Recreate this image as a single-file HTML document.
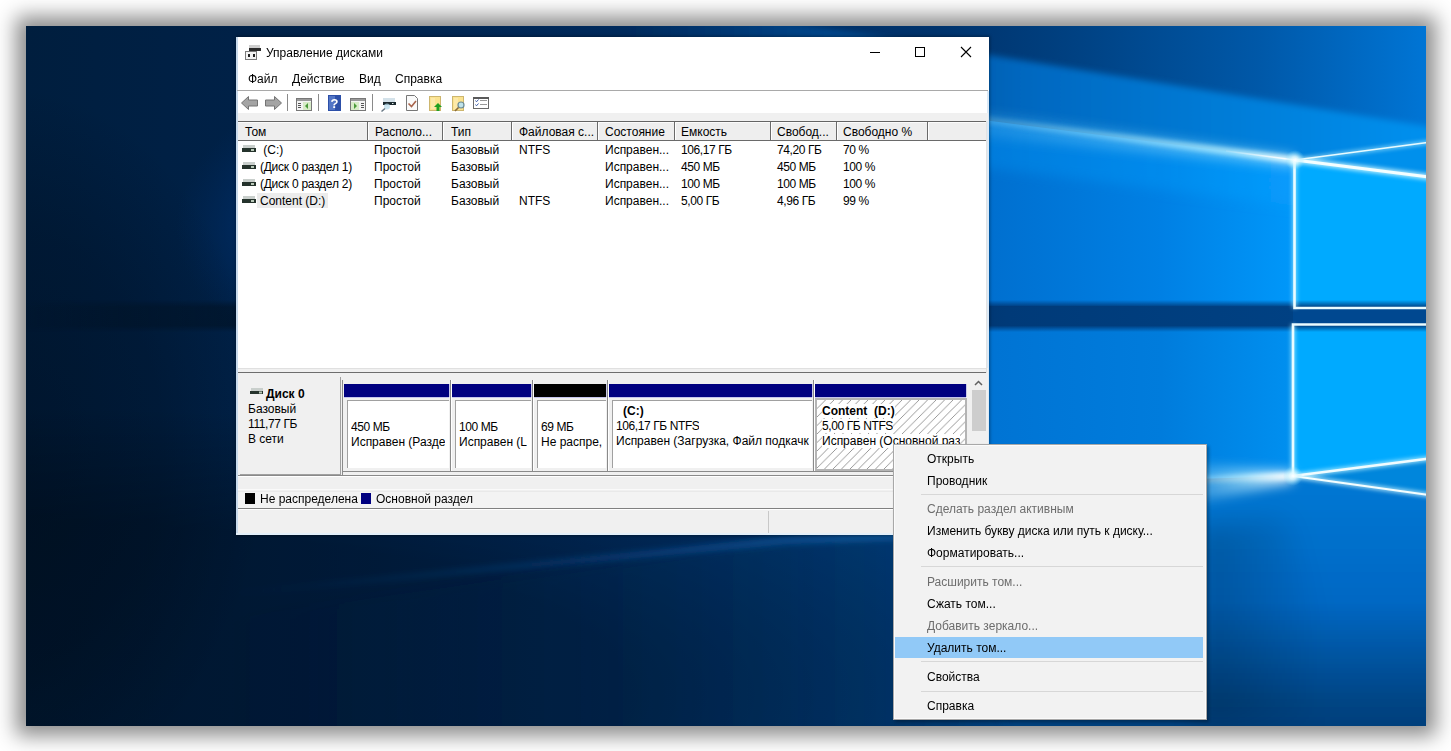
<!DOCTYPE html>
<html><head><meta charset="utf-8">
<style>
*{box-sizing:border-box;margin:0;padding:0}
html,body{width:1451px;height:751px;overflow:hidden;background:#fff}
body{position:relative;font-family:"Liberation Sans",sans-serif;font-size:12px;color:#000}
.a{position:absolute;white-space:nowrap}
.t{line-height:16px;height:16px}
.b{font-weight:bold}
.dis{color:#6d6d6d}
.n{letter-spacing:-0.4px}
</style></head><body>

<div class="a" style="left:26px;top:26px;width:1400px;height:700px;box-shadow:0 0 19px 10px rgba(0,0,0,0.45);overflow:hidden;background:#001f3f">
<svg width="1520" height="820" viewBox="-60 -60 1520 820" style="position:absolute;left:-60px;top:-60px">
<defs>
<linearGradient id="base" x1="0" y1="0" x2="1400" y2="0" gradientUnits="userSpaceOnUse">
<stop offset="0" stop-color="#001e3e"/>
<stop offset="0.2" stop-color="#00224a"/>
<stop offset="0.4" stop-color="#00295a"/>
<stop offset="0.65" stop-color="#00336c"/>
<stop offset="0.73" stop-color="#003e7d"/>
<stop offset="0.88" stop-color="#0058a8"/>
<stop offset="1" stop-color="#0075d5"/>
</linearGradient>
<linearGradient id="sky" x1="600" y1="0" x2="1400" y2="0" gradientUnits="userSpaceOnUse">
<stop offset="0" stop-color="#0050a0" stop-opacity="0"/>
<stop offset="0.5" stop-color="#0068c0" stop-opacity="1"/>
<stop offset="1" stop-color="#0090ee" stop-opacity="1"/>
</linearGradient>
<linearGradient id="paneL" x1="600" y1="0" x2="1269" y2="0" gradientUnits="userSpaceOnUse">
<stop offset="0" stop-color="#0060b8" stop-opacity="0"/>
<stop offset="0.55" stop-color="#0070d0" stop-opacity="1"/>
<stop offset="0.8" stop-color="#0080e4" stop-opacity="1"/>
<stop offset="1" stop-color="#0098fa" stop-opacity="1"/>
</linearGradient>
<linearGradient id="paneL2" x1="600" y1="0" x2="1269" y2="0" gradientUnits="userSpaceOnUse">
<stop offset="0" stop-color="#0060b8" stop-opacity="0"/>
<stop offset="0.55" stop-color="#0074d4" stop-opacity="1"/>
<stop offset="0.8" stop-color="#007cdc" stop-opacity="1"/>
<stop offset="1" stop-color="#0090f0" stop-opacity="1"/>
</linearGradient>
<linearGradient id="band" x1="0" y1="0" x2="1400" y2="0" gradientUnits="userSpaceOnUse">
<stop offset="0" stop-color="#00101f" stop-opacity="0.1"/>
<stop offset="0.06" stop-color="#00101f" stop-opacity="0.35"/>
<stop offset="0.15" stop-color="#00101f" stop-opacity="0.55"/>
<stop offset="0.4" stop-color="#001a3c" stop-opacity="0.9"/>
<stop offset="0.7" stop-color="#003a78" stop-opacity="1"/>
<stop offset="1" stop-color="#004488" stop-opacity="1"/>
</linearGradient>
<linearGradient id="floor" x1="0" y1="450" x2="0" y2="700" gradientUnits="userSpaceOnUse">
<stop offset="0" stop-color="#0078d4"/>
<stop offset="0.5" stop-color="#0068c4"/>
<stop offset="0.9" stop-color="#004585"/>
<stop offset="1" stop-color="#00407c"/>
</linearGradient>
<linearGradient id="floorL" x1="200" y1="0" x2="1267" y2="0" gradientUnits="userSpaceOnUse">
<stop offset="0" stop-color="#002a5a" stop-opacity="0"/>
<stop offset="0.6" stop-color="#003a70" stop-opacity="0.45"/>
<stop offset="1" stop-color="#0056a2" stop-opacity="1"/>
</linearGradient>
<linearGradient id="floorLeft" x1="1180" y1="0" x2="1300" y2="0" gradientUnits="userSpaceOnUse">
<stop offset="0" stop-color="#000" stop-opacity="0.2"/>
<stop offset="1" stop-color="#000" stop-opacity="0"/>
</linearGradient>
<radialGradient id="dl" cx="0" cy="1" r="1" gradientTransform="scale(1,0.9)">
<stop offset="0" stop-color="#000" stop-opacity="0.28"/>
<stop offset="0.6" stop-color="#000" stop-opacity="0.28"/>
<stop offset="1" stop-color="#000" stop-opacity="0"/>
</radialGradient>
<linearGradient id="beamL" x1="850" y1="0" x2="1269" y2="0" gradientUnits="userSpaceOnUse">
<stop offset="0" stop-color="#90e0ff" stop-opacity="0"/>
<stop offset="0.5" stop-color="#90e0ff" stop-opacity="0.5"/>
<stop offset="0.85" stop-color="#b0ecff" stop-opacity="0.85"/>
<stop offset="1" stop-color="#e8fcff" stop-opacity="1"/>
</linearGradient>
<linearGradient id="beamL2" x1="1140" y1="0" x2="1267" y2="0" gradientUnits="userSpaceOnUse">
<stop offset="0" stop-color="#b0ecff" stop-opacity="0"/>
<stop offset="0.6" stop-color="#c8f4ff" stop-opacity="0.6"/>
<stop offset="1" stop-color="#ffffff" stop-opacity="1"/>
</linearGradient>
<linearGradient id="streak" x1="200" y1="0" x2="900" y2="0" gradientUnits="userSpaceOnUse">
<stop offset="0" stop-color="#1060b0" stop-opacity="0"/>
<stop offset="0.6" stop-color="#1a6ac0" stop-opacity="0.35"/>
<stop offset="1" stop-color="#2080d0" stop-opacity="0.5"/>
</linearGradient>
<linearGradient id="beamL3" x1="1190" y1="0" x2="1269" y2="0" gradientUnits="userSpaceOnUse">
<stop offset="0" stop-color="#ffffff" stop-opacity="0"/>
<stop offset="1" stop-color="#ffffff" stop-opacity="1"/>
</linearGradient>
<linearGradient id="underBeam" x1="700" y1="0" x2="1269" y2="0" gradientUnits="userSpaceOnUse">
<stop offset="0" stop-color="#0090f0" stop-opacity="0"/>
<stop offset="0.5" stop-color="#0090f0" stop-opacity="0.4"/>
<stop offset="1" stop-color="#10a0ff" stop-opacity="0.45"/>
</linearGradient>
<radialGradient id="lglow">
<stop offset="0" stop-color="#003a80" stop-opacity="1"/>
<stop offset="0.5" stop-color="#003478" stop-opacity="0.75"/>
<stop offset="1" stop-color="#002a60" stop-opacity="0"/>
</radialGradient>
<linearGradient id="ldark" x1="0" y1="0" x2="200" y2="0" gradientUnits="userSpaceOnUse">
<stop offset="0" stop-color="#000814" stop-opacity="0.3"/>
<stop offset="1" stop-color="#000814" stop-opacity="0"/>
</linearGradient>
<radialGradient id="ldark2">
<stop offset="0" stop-color="#000814" stop-opacity="0.4"/>
<stop offset="0.6" stop-color="#000814" stop-opacity="0.25"/>
<stop offset="1" stop-color="#000814" stop-opacity="0"/>
</radialGradient>
<linearGradient id="bandV" x1="0" y1="274" x2="0" y2="306" gradientUnits="userSpaceOnUse">
<stop offset="0" stop-color="#fff" stop-opacity="0"/>
<stop offset="0.22" stop-color="#fff" stop-opacity="1"/>
<stop offset="0.8" stop-color="#fff" stop-opacity="1"/>
<stop offset="1" stop-color="#fff" stop-opacity="0"/>
</linearGradient>
<mask id="bandMask" maskUnits="userSpaceOnUse" x="-60" y="260" width="1520" height="60"><rect x="-60" y="274" width="1520" height="32" fill="url(#bandV)"/></mask>
<filter id="b2" x="-20%" y="-20%" width="140%" height="140%"><feGaussianBlur stdDeviation="2"/></filter>
<filter id="b1" x="-20%" y="-20%" width="140%" height="140%"><feGaussianBlur stdDeviation="0.7"/></filter>
<filter id="b6" x="-20%" y="-50%" width="140%" height="200%"><feGaussianBlur stdDeviation="6"/></filter>
<filter id="b12" x="-50%" y="-50%" width="200%" height="200%"><feGaussianBlur stdDeviation="14"/></filter>
<filter id="b3" x="-20%" y="-50%" width="140%" height="200%"><feGaussianBlur stdDeviation="3"/></filter>
<radialGradient id="glow">
<stop offset="0" stop-color="#ffffff" stop-opacity="1"/>
<stop offset="0.35" stop-color="#e0faff" stop-opacity="0.75"/>
<stop offset="1" stop-color="#80e0ff" stop-opacity="0"/>
</radialGradient>
</defs>
<rect width="1400" height="700" fill="url(#base)"/>
<ellipse cx="340" cy="200" rx="190" ry="140" fill="url(#lglow)"/>
<ellipse cx="-20" cy="420" rx="260" ry="360" fill="url(#ldark2)"/>
<polygon points="600,-30 1400,100 1460,112 1460,125 1269,134 600,48" fill="url(#sky)" filter="url(#b3)"/>
<polygon points="600,48 1269,134 1269,280 600,280" fill="url(#paneL)"/>
<polygon points="700,61 1269,134 1269,180 700,110" fill="url(#underBeam)" filter="url(#b6)"/>
<polygon points="1269,134 1460,108.8 1460,282 1269,282" fill="#0090ec"/>
<polygon points="1269,134 1460,158.3 1460,282 1269,282" fill="#00aaff"/>
<polygon points="600,299 1267,299 1267,450 600,470" fill="url(#paneL2)"/>
<polygon points="1267,298.5 1460,298.5 1460,425.3 1267,450" fill="#00aaff"/>
<polygon points="1267,450 1460,425.3 1460,477" fill="#0086dc"/>
<polygon points="1267,450 1460,477 1460,760 1000,760 900,520 1150,458" fill="url(#floor)" filter="url(#b2)"/>
<polygon points="1170,500 1260,490 1330,700 1170,700" fill="url(#floorLeft)" filter="url(#b12)"/>
<polygon points="150,600 1150,458 900,520 1000,760 150,760" fill="url(#floorL)" filter="url(#b6)"/>
<rect x="-60" y="274" width="1520" height="32" fill="url(#band)" mask="url(#bandMask)"/>
<rect x="1267" y="282" width="193" height="16.5" fill="#004890"/>
<rect x="0" y="380" width="1000" height="320" fill="url(#dl)"/>
<polygon points="200,566 760,511 900,505 900,512 760,518 200,570" fill="url(#streak)" filter="url(#b3)"/>
<!-- beams -->
<g filter="url(#b6)">
<polygon points="850,72 1269,130 1269,140 850,100" fill="url(#beamL)" opacity="0.6"/>
<polygon points="1120,436 1267,446 1267,456 1120,486" fill="url(#beamL2)" opacity="0.95"/>
</g>
<g filter="url(#b2)">
<path d="M850,80 L1269,134" stroke="url(#beamL)" stroke-width="7" fill="none" opacity="0.95"/>
<path d="M1269,134 L1460,158.3" stroke="#c8f4ff" stroke-width="6" fill="none" opacity="0.9"/>
<path d="M1269,134 L1460,108.8" stroke="#b8f0ff" stroke-width="3" opacity="0.8"/>
<path d="M1140,455 L1267,450" stroke="url(#beamL2)" stroke-width="7" fill="none"/>
<path d="M1267,450 L1460,477" stroke="#c8f4ff" stroke-width="4" fill="none" opacity="0.9"/>
<path d="M1267,450 L1460,425.3" stroke="#b8f0ff" stroke-width="4.5" opacity="0.9"/>
<path d="M1268.5,134 L1268.5,282" stroke="#b0f0ff" stroke-width="4" opacity="0.8"/>
<path d="M1267,298.5 L1267,450" stroke="#b0f0ff" stroke-width="4" opacity="0.8"/>
</g>
<g filter="url(#b1)">
<path d="M1200,125 L1269,134" stroke="url(#beamL3)" stroke-width="1.4" fill="none"/>
<path d="M1269,134 L1460,158.3" stroke="#f4feff" stroke-width="3" fill="none"/>
<path d="M1269,134 L1460,108.8" stroke="#e8fbff" stroke-width="1.4"/>
<path d="M1268.5,134 L1268.5,282 L1460,282" stroke="#eafcff" stroke-width="2.6" fill="none"/>
<path d="M1460,298.5 L1267,298.5 L1267,450" stroke="#eafcff" stroke-width="2.6" fill="none"/>
<path d="M1267,450 L1460,477" stroke="#f4feff" stroke-width="2" fill="none"/>
<path d="M1267,450 L1460,425.3" stroke="#f0fcff" stroke-width="2.4"/>
</g>
<circle cx="1269" cy="134" r="10" fill="url(#glow)"/>
<circle cx="1267" cy="450" r="10" fill="url(#glow)"/>
</svg></div>
<div class="a" style="left:237px;top:37px;width:752px;height:498px;background:#fff;box-shadow:0 0 3px 1px rgba(0,0,0,0.35)"></div>
<div class="a" style="left:236px;top:37px;width:2px;height:498px;background:#c8daec;"></div>
<div class="a" style="left:987px;top:91px;width:2px;height:444px;background:#dbe9f6;"></div>
<svg class="a" style="left:245px;top:44px" width="16" height="16" viewBox="0 0 16 16">
<rect x="4" y="1" width="11" height="3" fill="#cfcfcf"/>
<rect x="4" y="4" width="12" height="3" fill="#2b2b2b"/>
<rect x="0.5" y="7.5" width="11" height="8" fill="#f4f4f4" stroke="#7a7a7a" stroke-width="1"/>
<rect x="3" y="10" width="2" height="3" fill="#202020"/>
<rect x="8" y="10" width="2" height="3" fill="#202020"/>
</svg>
<div class="a t " style="left:266px;top:45px;">Управление дисками</div>
<svg class="a" style="left:860px;top:40px" width="120" height="24" viewBox="0 0 120 24">
<rect x="10" y="12" width="10" height="1" fill="#000"/>
<rect x="55.5" y="7.5" width="9" height="9" fill="none" stroke="#000" stroke-width="1"/>
<path d="M101 7 L111 17 M111 7 L101 17" stroke="#000" stroke-width="1.1"/>
</svg>
<div class="a t " style="left:248px;top:71px;">Файл</div>
<div class="a t " style="left:292px;top:71px;">Действие</div>
<div class="a t " style="left:359px;top:71px;">Вид</div>
<div class="a t " style="left:395px;top:71px;">Справка</div>
<div class="a" style="left:237px;top:90px;width:751px;height:1px;background:#a9a9a9;"></div>
<svg class="a" style="left:237px;top:91px" width="260" height="22" viewBox="0 0 260 22">
<path d="M4.5 12 L11.5 5.5 L11.5 9 L20.5 9 L20.5 15 L11.5 15 L11.5 18.5 Z" fill="#a4a4a4" stroke="#747474" stroke-width="1"/>
<path d="M44.5 12 L37.5 5.5 L37.5 9 L28.5 9 L28.5 15 L37.5 15 L37.5 18.5 Z" fill="#a4a4a4" stroke="#747474" stroke-width="1"/>
<rect x="50" y="3" width="1" height="17" fill="#8a8a8a"/>
<rect x="59.5" y="7.5" width="15" height="12" fill="#f4f4f4" stroke="#777" stroke-width="1"/>
<rect x="60" y="8" width="14" height="2" fill="#999"/>
<rect x="66" y="11" width="8" height="8" fill="#d8ecc8"/>
<path d="M71 12 L68 15 L71 18 Z" fill="#4a9a3a"/>
<rect x="61" y="12" width="3" height="1" fill="#555"/><rect x="61" y="14" width="3" height="1" fill="#555"/><rect x="61" y="16" width="3" height="1" fill="#555"/>
<rect x="81" y="3" width="1" height="17" fill="#8a8a8a"/>
<rect x="91" y="4" width="13" height="16" fill="#2c4fa8"/>
<rect x="92" y="5" width="6" height="14" fill="#6d8fd8" opacity="0.6"/>
<text x="97.5" y="17" font-family="Liberation Sans" font-weight="bold" font-size="13" fill="#fff" text-anchor="middle">?</text>
<rect x="113.5" y="7.5" width="15" height="12" fill="#f4f4f4" stroke="#777" stroke-width="1"/>
<rect x="114" y="8" width="14" height="2" fill="#999"/>
<rect x="114" y="11" width="8" height="8" fill="#d8ecc8"/>
<path d="M117 12 L120 15 L117 18 Z" fill="#4a9a3a"/>
<rect x="124" y="12" width="3" height="1" fill="#555"/><rect x="124" y="14" width="3" height="1" fill="#555"/><rect x="124" y="16" width="3" height="1" fill="#555"/>
<rect x="135" y="3" width="1" height="17" fill="#8a8a8a"/>
<rect x="146" y="7" width="12" height="4" fill="#d4e2ea"/>
<rect x="146" y="11" width="13" height="3" fill="#1c2a30"/>
<rect x="155" y="12" width="1.5" height="1" fill="#e8f0f0"/>
<circle cx="150" cy="15.5" r="3" fill="#b8dcec" opacity="0.75"/>
<path d="M148 17.5 L144.5 20.5" stroke="#6a7a86" stroke-width="1.6"/>
<path d="M169.5 4.5 L177.5 4.5 L180.5 7.5 L180.5 19.5 L169.5 19.5 Z" fill="#fafafa" stroke="#777" stroke-width="1"/>
<path d="M171.5 12.5 L174.5 15.5 L179 10" stroke="#a8644c" stroke-width="1.6" fill="none"/>
<rect x="192.5" y="5.5" width="11" height="14" fill="#fbe390" stroke="#cdb66e" stroke-width="1"/>
<rect x="194" y="7" width="4" height="11" fill="#fde9a8"/>
<path d="M201 12 L205 16 L202.5 16 L202.5 20 L199.5 20 L199.5 16 L197 16 Z" fill="#20a020"/>
<rect x="215.5" y="5.5" width="11" height="14" fill="#fbe390" stroke="#cdb66e" stroke-width="1"/>
<rect x="217" y="7" width="4" height="11" fill="#fde9a8"/>
<circle cx="224" cy="14" r="3" fill="#bfe3ea" stroke="#6c8a94" stroke-width="1.2"/>
<path d="M221.5 16.5 L218 20" stroke="#8a6a3a" stroke-width="1.6"/>
<rect x="236.5" y="6.5" width="15" height="11" fill="#fff" stroke="#6a6a6a" stroke-width="1"/><rect x="236" y="6" width="16" height="2" fill="#5a5a5a"/>
<path d="M238.5 9.5 L239.5 10.8 L241.5 8.5 M238.5 13.5 L239.5 14.8 L241.5 12.5" stroke="#3a5aa8" stroke-width="1" fill="none"/>
<rect x="243" y="9" width="7" height="1" fill="#999"/><rect x="243" y="13" width="7" height="1" fill="#999"/>
</svg>
<div class="a" style="left:238px;top:113px;width:750px;height:8px;background:#f0f0f0;"></div>
<div class="a" style="left:238px;top:121px;width:748px;height:1px;background:#646464;"></div>
<div class="a" style="left:238px;top:122px;width:748px;height:19px;background:#eeeeee;border-top:1px solid #fbfbfb;border-bottom:1px solid #6a6a6a"></div>
<div class="a" style="left:238px;top:141px;width:748px;height:227px;background:#ffffff;"></div>
<div class="a" style="left:986px;top:121px;width:1px;height:248px;background:#e3e3e3;"></div>
<div class="a" style="left:367px;top:122px;width:1px;height:19px;background:#6a6a6a;"></div>
<div class="a" style="left:368px;top:123px;width:1px;height:17px;background:#ffffff;"></div>
<div class="a" style="left:442px;top:122px;width:1px;height:19px;background:#6a6a6a;"></div>
<div class="a" style="left:443px;top:123px;width:1px;height:17px;background:#ffffff;"></div>
<div class="a" style="left:511px;top:122px;width:1px;height:19px;background:#6a6a6a;"></div>
<div class="a" style="left:512px;top:123px;width:1px;height:17px;background:#ffffff;"></div>
<div class="a" style="left:597px;top:122px;width:1px;height:19px;background:#6a6a6a;"></div>
<div class="a" style="left:598px;top:123px;width:1px;height:17px;background:#ffffff;"></div>
<div class="a" style="left:674px;top:122px;width:1px;height:19px;background:#6a6a6a;"></div>
<div class="a" style="left:675px;top:123px;width:1px;height:17px;background:#ffffff;"></div>
<div class="a" style="left:770px;top:122px;width:1px;height:19px;background:#6a6a6a;"></div>
<div class="a" style="left:771px;top:123px;width:1px;height:17px;background:#ffffff;"></div>
<div class="a" style="left:836px;top:122px;width:1px;height:19px;background:#6a6a6a;"></div>
<div class="a" style="left:837px;top:123px;width:1px;height:17px;background:#ffffff;"></div>
<div class="a" style="left:927px;top:122px;width:1px;height:19px;background:#6a6a6a;"></div>
<div class="a" style="left:928px;top:123px;width:1px;height:17px;background:#ffffff;"></div>
<div class="a t " style="left:245px;top:124px;">Том</div>
<div class="a t " style="left:375px;top:124px;">Располо...</div>
<div class="a t " style="left:451px;top:124px;">Тип</div>
<div class="a t " style="left:519px;top:124px;">Файловая с...</div>
<div class="a t " style="left:605px;top:124px;">Состояние</div>
<div class="a t " style="left:681px;top:124px;">Емкость</div>
<div class="a t " style="left:777px;top:124px;">Свобод...</div>
<div class="a t " style="left:843px;top:124px;">Свободно %</div>
<div class="a" style="left:257px;top:193px;width:71px;height:15px;background:#ececec;"></div>
<svg class="a" style="left:242px;top:145px" width="14" height="8" viewBox="0 0 14 8"><rect x="1" y="0" width="12" height="3" fill="#c9cfcc"/><rect x="0" y="3" width="14" height="4" fill="#25332c"/><rect x="9" y="4" width="3" height="2" fill="#b8c8b8"/></svg>
<div class="a t " style="left:260px;top:142px;"> (C:)</div>
<div class="a t " style="left:374px;top:142px;">Простой</div>
<div class="a t " style="left:451px;top:142px;">Базовый</div>
<div class="a t " style="left:519px;top:142px;">NTFS</div>
<div class="a t " style="left:605px;top:142px;">Исправен...</div>
<div class="a t n" style="left:681px;top:142px;">106,17 ГБ</div>
<div class="a t n" style="left:777px;top:142px;">74,20 ГБ</div>
<div class="a t n" style="left:843px;top:142px;">70 %</div>
<svg class="a" style="left:242px;top:162px" width="14" height="8" viewBox="0 0 14 8"><rect x="1" y="0" width="12" height="3" fill="#c9cfcc"/><rect x="0" y="3" width="14" height="4" fill="#25332c"/><rect x="9" y="4" width="3" height="2" fill="#b8c8b8"/></svg>
<div class="a t " style="left:260px;top:159px;letter-spacing:-0.25px">(Диск 0 раздел 1)</div>
<div class="a t " style="left:374px;top:159px;">Простой</div>
<div class="a t " style="left:451px;top:159px;">Базовый</div>
<div class="a t " style="left:519px;top:159px;"></div>
<div class="a t " style="left:605px;top:159px;">Исправен...</div>
<div class="a t n" style="left:681px;top:159px;">450 МБ</div>
<div class="a t n" style="left:777px;top:159px;">450 МБ</div>
<div class="a t n" style="left:843px;top:159px;">100 %</div>
<svg class="a" style="left:242px;top:179px" width="14" height="8" viewBox="0 0 14 8"><rect x="1" y="0" width="12" height="3" fill="#c9cfcc"/><rect x="0" y="3" width="14" height="4" fill="#25332c"/><rect x="9" y="4" width="3" height="2" fill="#b8c8b8"/></svg>
<div class="a t " style="left:260px;top:176px;letter-spacing:-0.25px">(Диск 0 раздел 2)</div>
<div class="a t " style="left:374px;top:176px;">Простой</div>
<div class="a t " style="left:451px;top:176px;">Базовый</div>
<div class="a t " style="left:519px;top:176px;"></div>
<div class="a t " style="left:605px;top:176px;">Исправен...</div>
<div class="a t n" style="left:681px;top:176px;">100 МБ</div>
<div class="a t n" style="left:777px;top:176px;">100 МБ</div>
<div class="a t n" style="left:843px;top:176px;">100 %</div>
<svg class="a" style="left:242px;top:196px" width="14" height="8" viewBox="0 0 14 8"><rect x="1" y="0" width="12" height="3" fill="#c9cfcc"/><rect x="0" y="3" width="14" height="4" fill="#25332c"/><rect x="9" y="4" width="3" height="2" fill="#b8c8b8"/></svg>
<div class="a t " style="left:260px;top:193px;">Content (D:)</div>
<div class="a t " style="left:374px;top:193px;">Простой</div>
<div class="a t " style="left:451px;top:193px;">Базовый</div>
<div class="a t " style="left:519px;top:193px;">NTFS</div>
<div class="a t " style="left:605px;top:193px;">Исправен...</div>
<div class="a t n" style="left:681px;top:193px;">5,00 ГБ</div>
<div class="a t n" style="left:777px;top:193px;">4,96 ГБ</div>
<div class="a t n" style="left:843px;top:193px;">99 %</div>
<div class="a" style="left:238px;top:368px;width:750px;height:165px;background:#f0f0f0;"></div>
<div class="a" style="left:236px;top:533px;width:753px;height:2px;background:#e4f0fa;"></div>
<div class="a" style="left:238px;top:368px;width:748px;height:1px;background:#e0e0e0;"></div>
<div class="a" style="left:238px;top:372px;width:748px;height:1px;background:#6d6d6d;"></div>
<div class="a" style="left:986px;top:368px;width:1px;height:5px;background:#e0e0e0;"></div>
<div class="a" style="left:240px;top:377px;width:101px;height:98px;background:#f0f0f0;border-right:1px solid #a0a0a0;border-bottom:1px solid #a0a0a0"></div>
<svg class="a" style="left:250px;top:388px" width="14" height="7" viewBox="0 0 14 7"><rect x="1" y="0" width="12" height="3" fill="#c9cfcc"/><rect x="0" y="3" width="13" height="3" fill="#25332c"/><rect x="9" y="3.5" width="3" height="2" fill="#b8c8b8"/></svg>
<div class="a t b" style="left:266px;top:386px;">Диск 0</div>
<div class="a t " style="left:248px;top:401px;">Базовый</div>
<div class="a t n" style="left:248px;top:416px;">111,77 ГБ</div>
<div class="a t " style="left:248px;top:431px;">В сети</div>
<div class="a" style="left:342px;top:380px;width:1px;height:96px;background:#8a8a8a;"></div>
<div class="a" style="left:344px;top:384px;width:105px;height:13px;background:#000080;"></div>
<div class="a" style="left:344px;top:397px;width:105px;height:1px;background:#c4c4ec;"></div>
<div class="a" style="left:449px;top:384px;width:1px;height:13px;background:#c8c8e8;"></div>
<div class="a" style="left:450px;top:380px;width:1px;height:92px;background:#8a8a8a;"></div>
<div class="a" style="left:451px;top:380px;width:1px;height:92px;background:#ffffff;"></div>
<div class="a" style="left:347px;top:400px;width:102px;height:68px;background:#ffffff;border-top:1px solid #a0a0a0;border-left:1px solid #a0a0a0"></div>
<div class="a t n" style="left:351px;top:419px;max-width:97px;overflow:hidden"><span style="">450 МБ</span></div>
<div class="a t " style="left:351px;top:434px;max-width:97px;overflow:hidden"><span style="">Исправен (Разде</span></div>
<div class="a" style="left:452px;top:384px;width:79px;height:13px;background:#000080;"></div>
<div class="a" style="left:452px;top:397px;width:79px;height:1px;background:#c4c4ec;"></div>
<div class="a" style="left:531px;top:384px;width:1px;height:13px;background:#c8c8e8;"></div>
<div class="a" style="left:532px;top:380px;width:1px;height:92px;background:#8a8a8a;"></div>
<div class="a" style="left:533px;top:380px;width:1px;height:92px;background:#ffffff;"></div>
<div class="a" style="left:455px;top:400px;width:76px;height:68px;background:#ffffff;border-top:1px solid #a0a0a0;border-left:1px solid #a0a0a0"></div>
<div class="a t n" style="left:459px;top:419px;max-width:71px;overflow:hidden"><span style="">100 МБ</span></div>
<div class="a t " style="left:459px;top:434px;max-width:71px;overflow:hidden"><span style="">Исправен (L</span></div>
<div class="a" style="left:534px;top:384px;width:72px;height:13px;background:#000000;"></div>
<div class="a" style="left:534px;top:397px;width:72px;height:1px;background:#c4c4ec;"></div>
<div class="a" style="left:606px;top:384px;width:1px;height:13px;background:#c8c8e8;"></div>
<div class="a" style="left:607px;top:380px;width:1px;height:92px;background:#8a8a8a;"></div>
<div class="a" style="left:608px;top:380px;width:1px;height:92px;background:#ffffff;"></div>
<div class="a" style="left:537px;top:400px;width:69px;height:68px;background:#ffffff;border-top:1px solid #a0a0a0;border-left:1px solid #a0a0a0"></div>
<div class="a t n" style="left:541px;top:419px;max-width:64px;overflow:hidden"><span style="">69 МБ</span></div>
<div class="a t " style="left:541px;top:434px;max-width:64px;overflow:hidden"><span style="">Не распре,</span></div>
<div class="a" style="left:609px;top:384px;width:203px;height:13px;background:#000080;"></div>
<div class="a" style="left:609px;top:397px;width:203px;height:1px;background:#c4c4ec;"></div>
<div class="a" style="left:812px;top:384px;width:1px;height:13px;background:#c8c8e8;"></div>
<div class="a" style="left:813px;top:380px;width:1px;height:92px;background:#8a8a8a;"></div>
<div class="a" style="left:814px;top:380px;width:1px;height:92px;background:#ffffff;"></div>
<div class="a" style="left:612px;top:400px;width:200px;height:68px;background:#ffffff;border-top:1px solid #a0a0a0;border-left:1px solid #a0a0a0"></div>
<div class="a t b" style="left:623px;top:403px">(C:)</div>
<div class="a t n" style="left:616px;top:418px;max-width:195px;overflow:hidden"><span style="">106,17 ГБ NTFS</span></div>
<div class="a t " style="left:616px;top:433px;max-width:195px;overflow:hidden"><span style="">Исправен (Загрузка, Файл подкачк</span></div>
<div class="a" style="left:815px;top:384px;width:151px;height:13px;background:#000080;"></div>
<div class="a" style="left:815px;top:397px;width:151px;height:1px;background:#c4c4ec;"></div>
<div class="a" style="left:966px;top:384px;width:1px;height:13px;background:#c8c8e8;"></div>
<div class="a" style="left:815px;top:398px;width:152px;height:73px;border:2px solid #b4b4b4;background:#fff"></div>
<svg class="a" style="left:817px;top:400px" width="148" height="69"><defs><pattern id="hp" width="8.5" height="8.5" patternUnits="userSpaceOnUse"><path d="M-1,9.5 L9.5,-1" stroke="#8c8c8c" stroke-width="0.9"/><path d="M7.5,9.5 L9.5,7.5 M-1,1 L1,-1" stroke="#8c8c8c" stroke-width="0.9"/></pattern></defs><rect width="100%" height="100%" fill="url(#hp)"/></svg>
<div class="a t b" style="left:822px;top:403px;max-width:143px;overflow:hidden"><span style="background:#fff;">Content  (D:)</span></div>
<div class="a t n" style="left:822px;top:418px;max-width:143px;overflow:hidden"><span style="background:#fff;">5,00 ГБ NTFS</span></div>
<div class="a t " style="left:822px;top:433px;max-width:143px;overflow:hidden"><span style="background:#fff;">Исправен (Основной раз</span></div>
<div class="a" style="left:342px;top:471px;width:627px;height:1px;background:#8a8a8a;"></div>
<div class="a" style="left:238px;top:475px;width:748px;height:1px;background:#8a8a8a;"></div>
<div class="a" style="left:238px;top:476px;width:748px;height:1px;background:#ffffff;"></div>
<div class="a" style="left:238px;top:489px;width:748px;height:1px;background:#fafafa;"></div>
<div class="a" style="left:238px;top:491px;width:748px;height:1px;background:#e9e9e9;"></div>
<div class="a" style="left:238px;top:492px;width:748px;height:16px;background:#f3f3f3;"></div>
<div class="a" style="left:971px;top:376px;width:15px;height:96px;background:#f0f0f0;"></div>
<svg class="a" style="left:971px;top:376px" width="15" height="14" viewBox="0 0 15 14"><path d="M4 9 L7.5 5.5 L11 9" stroke="#606060" stroke-width="1.5" fill="none"/></svg>
<div class="a" style="left:972px;top:390px;width:14px;height:41px;background:#cdcdcd;"></div>
<div class="a" style="left:245px;top:493px;width:10px;height:11px;background:#000000;"></div>
<div class="a t " style="left:260px;top:491px;">Не распределена</div>
<div class="a" style="left:361px;top:493px;width:10px;height:11px;background:#000080;"></div>
<div class="a t " style="left:376px;top:491px;">Основной раздел</div>
<div class="a" style="left:238px;top:508px;width:750px;height:1px;background:#808080;"></div>
<div class="a" style="left:238px;top:509px;width:750px;height:1px;background:#ffffff;"></div>
<div class="a" style="left:768px;top:511px;width:1px;height:22px;background:#c8c8c8;"></div>
<div class="a" style="left:893px;top:444px;width:314px;height:276px;background:#f2f2f2;box-shadow:inset 0 0 0 1px #a8a8a8, inset 0 0 0 2px #fbfbfb, 2px 2px 3px rgba(0,0,0,0.3)"></div>
<div class="a" style="left:895px;top:637px;width:308px;height:21px;background:#91c9f7;"></div>
<div class="a t " style="left:927px;top:451px;">Открыть</div>
<div class="a t " style="left:927px;top:473px;">Проводник</div>
<div class="a t dis" style="left:927px;top:501px;">Сделать раздел активным</div>
<div class="a t " style="left:927px;top:523px;">Изменить букву диска или путь к диску...</div>
<div class="a t " style="left:927px;top:545px;">Форматировать...</div>
<div class="a t dis" style="left:927px;top:574px;">Расширить том...</div>
<div class="a t " style="left:927px;top:596px;">Сжать том...</div>
<div class="a t dis" style="left:927px;top:618px;">Добавить зеркало...</div>
<div class="a t " style="left:927px;top:640px;">Удалить том...</div>
<div class="a t " style="left:927px;top:669px;">Свойства</div>
<div class="a t " style="left:927px;top:698px;">Справка</div>
<div class="a" style="left:921px;top:494px;width:282px;height:1px;background:#d7d7d7;"></div>
<div class="a" style="left:921px;top:566px;width:282px;height:1px;background:#d7d7d7;"></div>
<div class="a" style="left:921px;top:661px;width:282px;height:1px;background:#d7d7d7;"></div>
<div class="a" style="left:921px;top:691px;width:282px;height:1px;background:#d7d7d7;"></div>
</body></html>
